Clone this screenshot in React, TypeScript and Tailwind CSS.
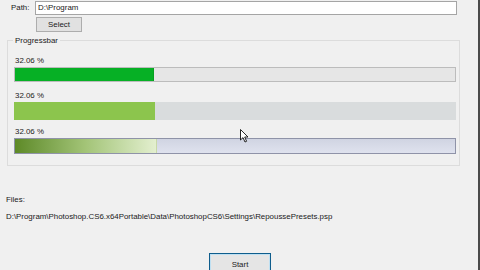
import React from 'react';

const font = { fontFamily: '"Liberation Sans", Arial, sans-serif' };

const Bar: React.FC<{ label: string; pct: number; track: string; fill: string; h: string; mt: string }> = ({ label, pct, track, fill, h, mt }) => (
  <div className={mt}>
    <div className="h-[13px] leading-[13px] pl-[1px]">{label}</div>
    <div className={`relative ${h} ${track}`}>
      <div className={`absolute left-0 top-0 bottom-0 ${fill}`} style={{ width: `${pct}%` }} />
    </div>
  </div>
);

export default function App() {
  return (
    <div className="relative w-[480px] h-[270px] overflow-hidden bg-[#f0f0f0] text-[7.9px] text-[#1a1a1a] border-r-2 border-[#4a4a4a]" style={font}>
      {/* path row */}
      <div className="flex items-center pt-[1px] pl-[11px]">
        <span className="w-[24px]">Path:</span>
        <div className="w-[422px] h-[14px] bg-white border border-[#a5a5a5] pl-[2px] leading-[12px]">D:\Program</div>
      </div>
      <div className="pl-[36px] mt-[2px]">
        <button className="w-[46px] h-[15px] bg-[#e1e1e1] border border-[#adadad] leading-[13px]">Select</button>
      </div>

      {/* group box */}
      <div className="relative ml-[7px] w-[453px] h-[126px] mt-[8px] border border-[#dcdcdc] pl-[6px] pr-[3px] pt-[13px]">
        <span className="absolute left-[5px] -top-[6px] px-[2px] bg-[#f0f0f0] leading-[12px]">Progressbar</span>
        <div className="flex flex-col">
          <Bar mt="mt-0" label="32.06 %" pct={31.7} h="h-[15px]" track="bg-[#e6e6e6] border border-[#bcbcbc]" fill="bg-[#06b025] border-r border-[#06a020]" />
          <Bar mt="mt-[7px]" label="32.06 %" pct={32} h="h-[18px]" track="bg-[#d9dcdd]" fill="bg-[#8cc54d]" />
          <Bar mt="mt-[5px]" label="32.06 %" pct={32.3} h="h-[16px]" track="bg-gradient-to-b from-[#d0d4e2] to-[#dfe2ee] border border-[#8f93a8]" fill="bg-gradient-to-r from-[#5e8a26] via-[#a3c477] to-[#e3efcf] border-r border-[#c8d8a8]" />
        </div>
      </div>

      <div className="pl-[6px] mt-[28px] leading-[12px]">Files:</div>
      <div className="pl-[6px] mt-[5px] leading-[12px]">D:\Program\Photoshop.CS6.x64Portable\Data\PhotoshopCS6\Settings\RepoussePresets.psp</div>

      <div className="pl-[209px] mt-[30px]">
        <button className="w-[62px] h-[24px] bg-[#e5e5e5] border border-[#0f5d8c] outline outline-1 outline-[#bfe0f2] -outline-offset-2 leading-[22px]">Start</button>
      </div>

      {/* mouse pointer */}
      <svg className="absolute left-[240px] top-[129px]" width="9" height="14" viewBox="0 0 9 14">
        <path d="M0.5 0.5 L0.5 11 L3 8.6 L5 13 L6.6 12.3 L4.7 8 L8 8 Z" fill="#fff" stroke="#111" strokeWidth="0.9" />
      </svg>
    </div>
  );
}
